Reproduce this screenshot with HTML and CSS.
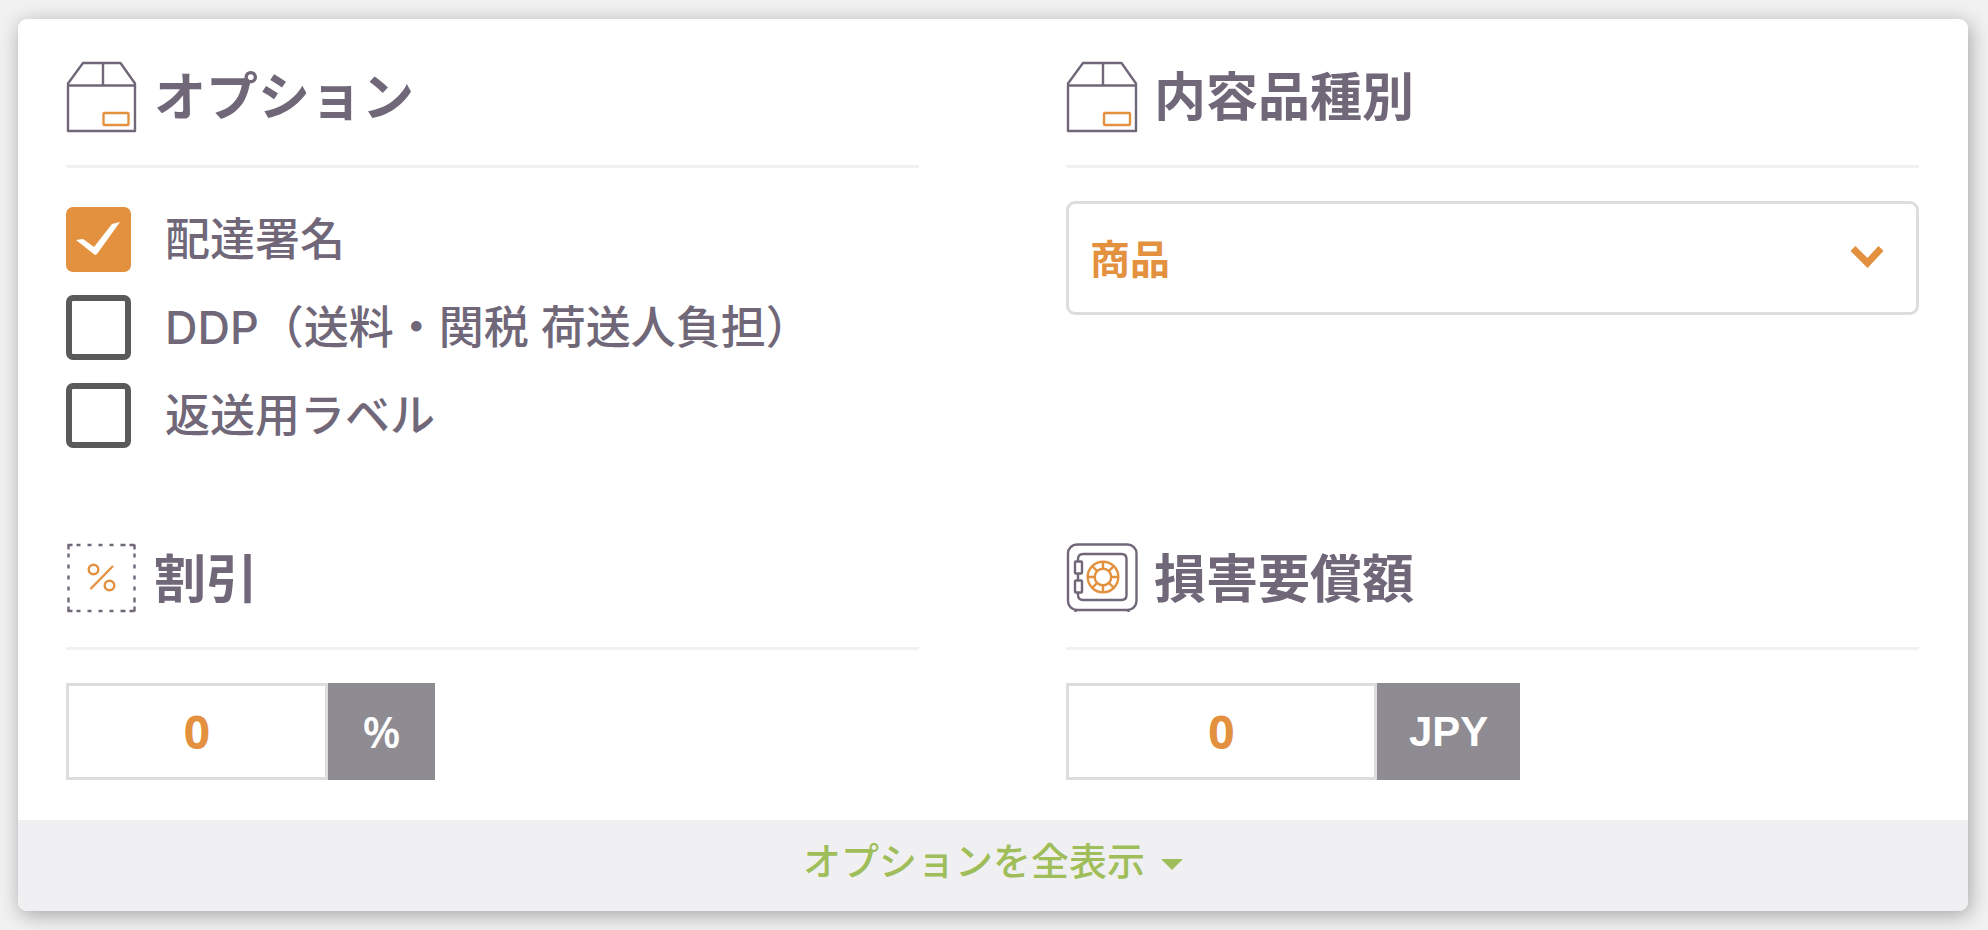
FILE: index.html
```html
<!DOCTYPE html>
<html lang="ja">
<head>
  <meta charset="UTF-8">
  <meta name="viewport" content="width=device-width, initial-scale=1.0">
  <title>オプション</title>
  <link rel="stylesheet" href="styles.css">
</head>
<body>
  <form class="card">
    <div class="card-body">
      <section class="section">
        <h2 class="section-title">
          <svg class="icon" viewBox="0 0 72 72" aria-hidden="true">
            <path d="M2 22.500 17 2h37.500L69 22.500V70H2zM2 24.500h67M37 2v22"/>
            <rect class="accent" x="37.500" y="52" width="25" height="12" rx="1"/>
          </svg>
          オプション
        </h2>
        <div class="options">
          <label class="option"><input type="checkbox" checked> 配達署名</label>
          <label class="option"><input type="checkbox"> DDP（送料・関税 荷送人負担）</label>
          <label class="option"><input type="checkbox"> 返送用ラベル</label>
        </div>
      </section>

      <section class="section">
        <h2 class="section-title">
          <svg class="icon" viewBox="0 0 72 72" aria-hidden="true">
            <path d="M2 22.500 17 2h38.500L70 22.500V70H2zM2 24.500h68M37 2v22"/>
            <rect class="accent" x="38" y="52" width="26" height="12" rx="1"/>
          </svg>
          <label for="contents">内容品種別</label>
        </h2>
        <div class="select-wrap">
          <select id="contents">
            <option>商品</option>
          </select>
          <svg class="chevron" viewBox="0 0 32 22" aria-hidden="true">
            <path d="M2 2.500 16.500 17 30 2.500"/>
          </svg>
        </div>
      </section>

      <section class="section">
        <h2 class="section-title">
          <svg class="icon" viewBox="0 0 72 72" aria-hidden="true">
            <g stroke-dasharray="5 4 4 7 4 7 4 7 4 7 5 4 5">
              <path d="M1.500 2h67"/>
              <path d="M1.500 68h67"/>
              <path d="M2.500 1.500v67"/>
              <path d="M68.500 1.500v67"/>
            </g>
            <g class="accent">
              <circle cx="27.500" cy="26.500" r="4.800"/>
              <circle cx="43.500" cy="42.500" r="4.800"/>
              <path d="M47 23 24.500 46"/>
            </g>
          </svg>
          <label for="discount">割引</label>
        </h2>
        <div class="input-group">
          <input class="input-percent" type="text" inputmode="numeric" id="discount" value="0">
          <span class="unit">%</span>
        </div>
      </section>

      <section class="section">
        <h2 class="section-title">
          <svg class="icon" viewBox="0 0 72 72" aria-hidden="true">
            <rect x="2" y="1.500" width="68.500" height="65.500" rx="9"/>
            <path d="M9.500 66v3M62.500 66v3"/>
            <path d="M12 18v-2q0-5 5-5h38.500q5 0 5 5v36q0 5-5 5H17q-5 0-5-5v-2M12 31v6"/>
            <rect x="9" y="18.500" width="7" height="12" rx="1"/>
            <rect x="9" y="37.500" width="7" height="12" rx="1"/>
            <g class="accent">
              <circle cx="37" cy="34" r="15.300"/>
              <circle cx="37" cy="34" r="8.300"/>
              <path d="M37 18.700v7M37 42.300v7M21.700 34h7M45.300 34h7M26.200 23.200l5 5M42.900 39.900l5 5M47.800 23.200l-5 5M31.200 39.900l-5 5"/>
            </g>
          </svg>
          <label for="damage">損害要償額</label>
        </h2>
        <div class="input-group">
          <input class="input-amount" type="text" inputmode="numeric" id="damage" value="0">
          <span class="unit unit-bold">JPY</span>
        </div>
      </section>
    </div>

    <button class="show-all" type="button">オプションを全表示 <span class="caret"></span></button>
  </form>
</body>
</html>
```

FILE: styles.css
```css
* {
  box-sizing: border-box;
  margin: 0;
  padding: 0;
}
body {
  padding: 19px 20px 20px 18px;
  background: #f1f1f1;
  color: #706779;
  font-family: "Liberation Sans", "Noto Sans CJK JP", sans-serif;
}
.card {
  background: #fff;
  border-radius: 9px;
  box-shadow: 2px 4px 20px rgba(0, 0, 0, 0.32);
  overflow: hidden;
}
.card-body {
  display: grid;
  grid-template-columns: 1fr 1fr;
  gap: 95px 147px;
  padding: 42px 49px 40px 48px;
}

/* Section headings */
.section-title {
  display: flex;
  align-items: flex-start;
  gap: 16px;
  height: 107px;
  margin-bottom: 33px;
  border-bottom: 3px solid #f1f1f1;
  font-size: 52px;
  font-weight: 700;
  line-height: 74px;
}
.icon {
  flex: none;
  width: 72px;
  height: 72px;
  fill: none;
  stroke: #706779;
  stroke-width: 2.4;
  stroke-linejoin: round;
}
.icon .accent {
  stroke: #e3913f;
}

/* Checkboxes */
.options {
  display: flex;
  flex-direction: column;
  gap: 23px;
  padding-top: 6px;
}
.option {
  display: flex;
  align-items: center;
  gap: 34px;
  font-family: Inter, "Noto Sans CJK JP", sans-serif;
  font-size: 45px;
  font-weight: 500;
  line-height: 65px;
}
.option input {
  flex: none;
  width: 65px;
  height: 65px;
  appearance: none;
  border: 6px solid #5a5a5a;
  border-radius: 7px;
  background: #fff;
}
.option input:checked {
  border: none;
  background: #e3913f;
}
.option input:checked::before {
  content: "";
  display: block;
  height: 65px;
  background: #fff;
  clip-path: polygon(10px 33px, 17px 32px, 28px 40px, 46px 17px, 54px 15px, 31px 47px, 29px 48px);
}

/* Select */
.select-wrap {
  position: relative;
}
.select-wrap select {
  width: 100%;
  height: 114px;
  padding: 0 21px 2px;
  appearance: none;
  border: 3px solid #ddd;
  border-radius: 9px;
  background: #fff;
  color: #e3913f;
  font: 700 40px "Noto Sans CJK JP", sans-serif;
}
.chevron {
  position: absolute;
  top: 45px;
  right: 36px;
  width: 32px;
  height: 22px;
  fill: none;
  stroke: #e3913f;
  stroke-width: 7;
  pointer-events: none;
}

/* Number inputs with a unit */
.input-group {
  display: flex;
  height: 97px;
}
.input-group input {
  padding-bottom: 2px;
  border: 3px solid #ddd;
  background: #fff;
  color: #e3913f;
  font: 700 46px "Open Sans", sans-serif;
  text-align: center;
}
.input-percent {
  width: 262px;
}
.input-amount {
  width: 311px;
}
.unit {
  display: flex;
  align-items: center;
  justify-content: center;
  min-width: 107px;
  padding: 0 32px 2px;
  background: #8f8b92;
  color: #fff;
  font: 600 44px "Open Sans", sans-serif;
}
.unit-bold {
  padding-bottom: 0;
  font: 700 42px "Liberation Sans", sans-serif;
}

/* Footer */
.show-all {
  display: flex;
  justify-content: center;
  align-items: center;
  gap: 16px;
  width: 100%;
  height: 91px;
  padding-bottom: 14px;
  border: none;
  background: #f0f0f2;
  color: #9fbe5a;
  font: 500 38px "Noto Sans CJK JP", sans-serif;
  cursor: pointer;
}
.caret {
  margin-top: 12px;
  border: 11px solid transparent;
  border-top-color: #9fbe5a;
  border-bottom: none;
}
```
